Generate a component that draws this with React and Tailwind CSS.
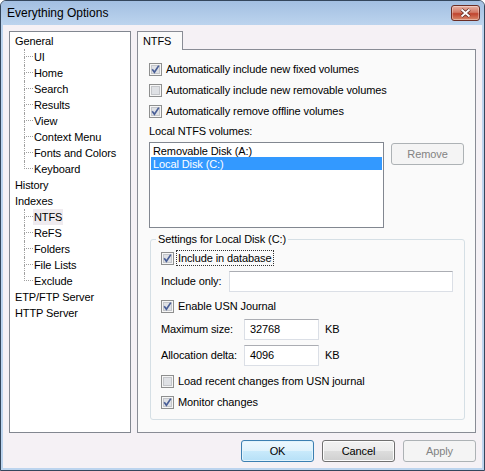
import React from "react";

const tree = [
  { label: "General", children: ["UI", "Home", "Search", "Results", "View", "Context Menu", "Fonts and Colors", "Keyboard"] },
  { label: "History" },
  { label: "Indexes", children: ["NTFS", "ReFS", "Folders", "File Lists", "Exclude"] },
  { label: "ETP/FTP Server" },
  { label: "HTTP Server" },
];

function CheckBox({ checked }) {
  return (
    <svg width="13" height="13" viewBox="0 0 13 13" className="shrink-0">
      <rect x="0.5" y="0.5" width="12" height="12" fill="#f6f6f6" stroke="#8e8f8f" />
      <rect x="2.5" y="2.5" width="8" height="8" fill="#dfe1e5" stroke="#c4c6ca" />
      {checked && (
        <path d="M3.2 6.3 L5.4 9.2 L9.8 2.6" fill="none" stroke="#4a5f97" strokeWidth="1.7" />
      )}
    </svg>
  );
}

function CheckRow({ checked, label, focus }) {
  return (
    <div className="flex items-center h-[16px]">
      <CheckBox checked={checked} />
      <span
        className={
          "ml-[2px] px-[1px] leading-[14px] border border-dotted " +
          (focus ? "border-[#333]" : "border-transparent")
        }
      >
        {label}
      </span>
    </div>
  );
}

function TextBox({ value, className }) {
  return (
    <div
      className={
        "h-[21px] bg-white border border-[#dbdfe6] border-t-[#abadb3] flex items-center pl-[5px] " + className
      }
    >
      {value}
    </div>
  );
}

function WinButton({ children, kind }) {
  const styles = {
    ok: "border-[#3c7fb1] bg-[linear-gradient(#edf8fe,#dff2fc_50%,#c9eafb_50%,#b6e0f7)] shadow-[inset_0_0_0_1px_#e2f3fc] text-black",
    normal: "border-[#707070] bg-[linear-gradient(#f2f2f2,#ebebeb_50%,#dddddd_50%,#cfcfcf)] shadow-[inset_0_0_0_1px_#fcfcfc] text-black",
    disabled: "border-[#adb2b5] bg-[#f4f4f4] text-[#838383]",
  };
  return (
    <div className={"w-[73px] h-[22px] rounded-[3px] border flex items-center justify-center " + styles[kind]}>
      {children}
    </div>
  );
}

function TreeView() {
  return (
    <div className="w-[122px] h-[402px] border border-[#828790] bg-white pt-[1px] pl-[5px]">
      {tree.map((node) => (
        <div key={node.label}>
          <div className="h-[16px] leading-[16px]">{node.label}</div>
          {node.children && (
            <div className="ml-[9px]">
              {node.children.map((c, i) => {
                const last = i === node.children.length - 1;
                return (
                  <div key={c} className="flex h-[16px]">
                    <div className="w-[9px] flex flex-col">
                      <div className="h-[8px] border-l border-b border-dotted border-[#a0a0a0]" />
                      {!last && <div className="flex-1 border-l border-dotted border-[#a0a0a0]" />}
                    </div>
                    <span className={"px-[1px] leading-[16px] " + (c === "NTFS" ? "bg-[#efebef]" : "")}>{c}</span>
                  </div>
                );
              })}
            </div>
          )}
        </div>
      ))}
    </div>
  );
}

function NtfsPanel() {
  return (
    <div className="flex flex-col">
      <div className="w-[46px] h-[19px] border border-b-0 border-[#898c95] bg-[#fafafa] -mb-px relative z-10 pl-[5px] leading-[18px]">
        NTFS
      </div>
      <div className="h-[384px] w-[339px] border border-[#898c95] bg-[#fafafa] pl-[11px] pt-[11px]">
        <div className="flex flex-col gap-[5px]">
          <CheckRow checked label="Automatically include new fixed volumes" />
          <CheckRow label="Automatically include new removable volumes" />
          <CheckRow checked label="Automatically remove offline volumes" />
        </div>
        <div className="mt-[4px] h-[16px] leading-[16px]">Local NTFS volumes:</div>
        <div className="mt-[3px] flex items-start gap-[7px]">
          <div className="w-[235px] h-[86px] border border-[#828790] bg-white p-[1px]">
            <div className="h-[13px] leading-[14px] pl-[2px]">Removable Disk (A:)</div>
            <div className="h-[13px] leading-[14px] pl-[2px] bg-[#3399ff] text-white">Local Disk (C:)</div>
          </div>
          <div className="mt-[1px]">
            <WinButton kind="disabled">Remove</WinButton>
          </div>
        </div>
        <div className="relative mt-[11px] ml-[1px] w-[315px] h-[181px] border border-[#d5dfe5] rounded-[3px] pl-[10px] pt-[10px]">
          <span className="absolute -top-[8px] left-[5px] px-[2px] bg-[#fafafa] leading-[15px]">
            Settings for Local Disk (C:)
          </span>
          <CheckRow checked focus label="Include in database" />
          <div className="mt-[5px] flex items-center">
            <span className="w-[68px]">Include only:</span>
            <TextBox value="" className="w-[224px]" />
          </div>
          <div className="mt-[6px]">
            <CheckRow checked label="Enable USN Journal" />
          </div>
          <div className="mt-[5px] flex items-center">
            <span className="w-[83px]">Maximum size:</span>
            <TextBox value="32768" className="w-[75px]" />
            <span className="ml-[6px]">KB</span>
          </div>
          <div className="mt-[5px] flex items-center">
            <span className="w-[83px]">Allocation delta:</span>
            <TextBox value="4096" className="w-[75px]" />
            <span className="ml-[6px]">KB</span>
          </div>
          <div className="mt-[7px]">
            <CheckRow label="Load recent changes from USN journal" />
          </div>
          <div className="mt-[5px]">
            <CheckRow checked label="Monitor changes" />
          </div>
        </div>
      </div>
    </div>
  );
}

export default function App() {
  return (
    <div className="w-[485px] h-[471px] border border-[#34465c] rounded-t-[6px] overflow-hidden flex flex-col bg-[#bcd4ee] font-['Liberation_Sans',Arial,sans-serif] text-[11px] tracking-[-0.1px] text-black">
      <div className="h-[24px] shrink-0 flex items-center justify-between pl-[6px] pr-[4px] bg-linear-to-b from-[#a3bfe2] to-[#bcd4ee]">
        <span className="text-[12px] tracking-normal text-black">Everything Options</span>
        <div className="w-[29px] h-[16px] rounded-[3px] border border-[#6b2d24] bg-[linear-gradient(#e8b1a4,#d27a66_45%,#c0442e_55%,#d98a6c)] shadow-[inset_0_0_0_1px_rgba(255,255,255,0.35)] flex items-center justify-center">
          <svg width="13" height="10" viewBox="0 0 13 10">
            <path d="M2.5 1.5 L10.5 8.5 M10.5 1.5 L2.5 8.5" stroke="#5a2a22" strokeWidth="3.4" />
            <path d="M2.5 1.5 L10.5 8.5 M10.5 1.5 L2.5 8.5" stroke="#ffffff" strokeWidth="1.8" />
          </svg>
        </div>
      </div>
      <div className="flex-1 mx-[2px] mb-[2px] bg-[#f5f1f5] pt-[6px] px-[6px] flex flex-col">
        <div className="flex gap-[6px]">
          <TreeView />
          <NtfsPanel />
        </div>
        <div className="mt-[7px] flex justify-end gap-[8px]">
          <WinButton kind="ok">OK</WinButton>
          <WinButton kind="normal">Cancel</WinButton>
          <WinButton kind="disabled">Apply</WinButton>
        </div>
      </div>
    </div>
  );
}
